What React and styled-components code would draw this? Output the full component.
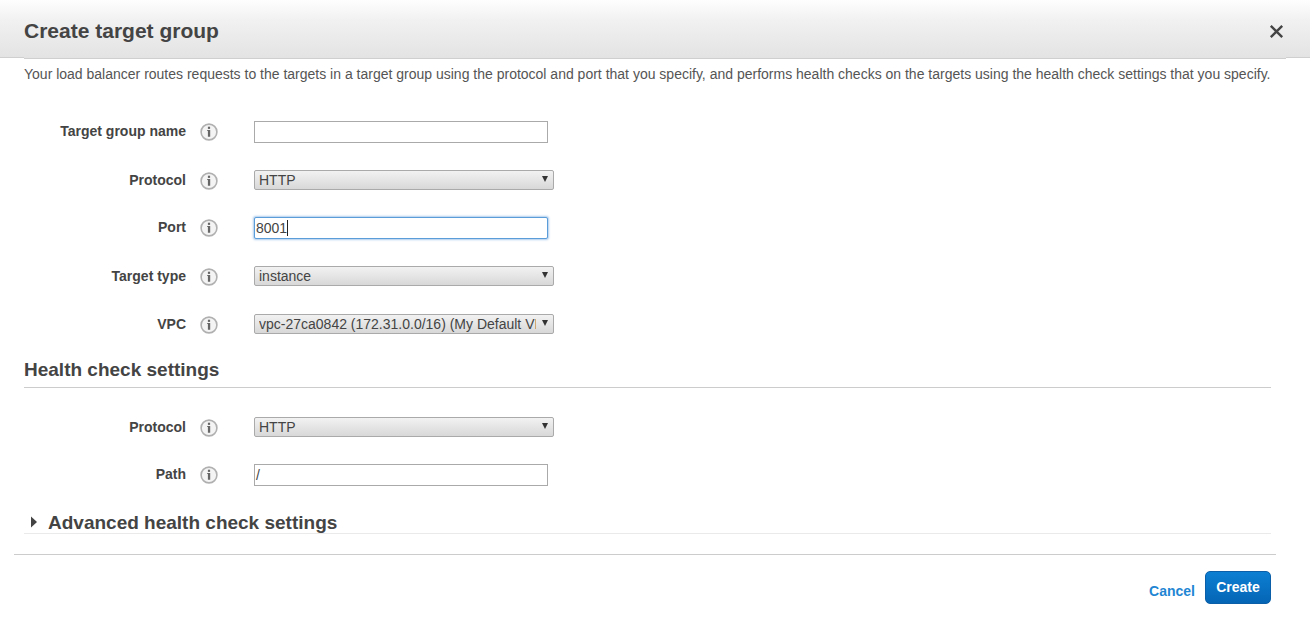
import React from "react";
import styled, { createGlobalStyle } from "styled-components";

const Global = createGlobalStyle`
  html, body { margin: 0; padding: 0; background: #fff; }
  body { font-family: "Liberation Sans", Arial, sans-serif; color: #444; }
  * { box-sizing: border-box; }
`;
const Page = styled.div`
  width: 1310px; height: 624px; overflow: hidden; display: flex; flex-direction: column;
`;
const Header = styled.header`
  position: relative;
  height: 59px; flex: none; display: flex; align-items: center; justify-content: space-between;
  padding: 3px 24px 0 24px;
  background: linear-gradient(to bottom, #fefefe 0%, #f1f1f1 35%, #e3e3e3 100%) no-repeat;
  background-size: 100% 58px;
  &::before {
    content: ""; position: absolute; left: 0; right: 0; top: 57px; height: 1px;
    background: linear-gradient(to right, #cfcfcf 24px, transparent 24px, transparent 1286px, #cfcfcf 1286px);
  }
  &::after {
    content: ""; position: absolute; left: 24px; right: 24px; top: 58px; height: 1px; background: #cfcfcf;
  }
`;
const Title = styled.h1`
  margin: 0; font-size: 21px; font-weight: 700; color: #444; line-height: 24px;
`;
const CloseIcon = styled.svg`
  width: 15px; height: 15px; margin-right: 2px; margin-top: 1px; display: block;
`;
const Body = styled.main`
  padding: 0 39px 0 24px; flex: none;
`;
const Intro = styled.p`
  margin: 0; padding-top: 6px; height: 49px; font-size: 14px; line-height: 18px; color: #555; white-space: nowrap;
`;
const Row = styled.div`
  height: 48px; display: grid; grid-template-columns: 162px 14px 18px 36px auto; align-items: center; justify-content: start;
`;
const Label = styled.label`
  grid-column: 1; text-align: right; font-size: 14px; font-weight: 700; color: #444; line-height: 16px;
  position: relative; top: ${p => (p.$select ? "0" : "-1px")};
`;
const Info = styled.svg`
  grid-column: 3; width: 18px; height: 18px; display: block;
  position: relative; top: ${p => (p.$select ? "1px" : "0")};
`;
const TextBox = styled.div`
  grid-column: 5; width: 294px; height: 22px; background: #fff;
  border: 1px solid ${p => (p.$focus ? "#5b9dd9" : "#aaa")};
  box-shadow: ${p => (p.$focus ? "0 0 2px 1px rgba(70,140,210,.45)" : "none")};
  border-radius: ${p => (p.$focus ? "2px" : "0")};
  padding: 0 1px; font-size: 14px; line-height: 20px; color: #444; display: flex; align-items: center;
`;
const Caret = styled.span`
  display: inline-block; width: 1px; height: 16px; background: #222;
`;
const Select = styled.div`
  grid-column: 5; width: 300px; height: 20px; display: flex; align-items: center; justify-content: space-between;
  padding: 0 5px 0 4px; border: 1px solid #aaa; border-radius: 2px;
  background: linear-gradient(to bottom, #f2f2f2, #d8d8d8);
  font-size: 14px; color: #444; line-height: 18px;
`;
const SelectText = styled.span`
  overflow: hidden; white-space: nowrap; width: 277px;
`;
const Arrow = styled.svg`
  width: 6px; height: 6px; flex: none; display: block; margin-top: -2px;
`;
const SectionHead = styled.h2`
  margin: 0; padding-top: 10px; height: 40px; font-size: 19px; line-height: 24px; font-weight: 700; color: #444;
  border-bottom: 1px solid #ccc;
`;
const Spacer = styled.div`
  height: 15px;
`;
const Advanced = styled.div`
  height: 35px; padding: 13px 0 0 6px; display: flex; align-items: center; gap: 10px;
  border-bottom: 1px solid #eaeaea; font-size: 19px; font-weight: 700; color: #444; line-height: 22px;
`;
const Tri = styled.svg`
  width: 8px; height: 12px; flex: none; display: block; margin-top: -2px;
`;
const Footer = styled.footer`
  margin: 20px 34px 0 14px; border-top: 1px solid #ccc; display: flex; justify-content: flex-end; align-items: flex-start;
  padding: 16px 5px 0 0; gap: 10px;
`;
const Cancel = styled.a`
  font-size: 14px; font-weight: 700; color: #1f86d3; line-height: 16px; margin-top: 12px;
`;
const Primary = styled.button`
  width: 66px; height: 33px; padding: 0 0 1px; border: 1px solid #0a5fa8; border-radius: 5px;
  background: linear-gradient(to bottom, #0c7fd2, #0565b5);
  color: #fff; font: 700 14px "Liberation Sans", Arial, sans-serif;
`;

const InfoIcon = ({ select }) => (
  <Info viewBox="0 0 18 18" $select={select}>
    <circle cx="9" cy="9" r="7.9" fill="#f4f4f4" stroke="#b0b0b0" strokeWidth="1.6" />
    <rect x="7.9" y="3.7" width="2.2" height="2.2" fill="#666" />
    <path d="M7.2 7h3v6.8H7.9v-5.7H7.2z" fill="#666" />
  </Info>
);
const SelectArrow = () => (
  <Arrow viewBox="0 0 6 6"><path d="M0 0h6L3 6z" fill="#333" /></Arrow>
);
const Field = ({ label, select, children }) => (
  <Row>
    <Label $select={select}>{label}</Label>
    <InfoIcon select={select} />
    {children}
  </Row>
);
const Dropdown = ({ value }) => (
  <Select>
    <SelectText>{value}</SelectText>
    <SelectArrow />
  </Select>
);

export default function App() {
  return (
    <Page>
      <Global />
      <Header>
        <Title>Create target group</Title>
        <CloseIcon viewBox="0 0 15 15">
          <path d="M1.8 1.8l11.4 11.4M13.2 1.8L1.8 13.2" stroke="#444" strokeWidth="2.4" fill="none" />
        </CloseIcon>
      </Header>
      <Body>
        <Intro>
          Your load balancer routes requests to the targets in a target group using the protocol and port that you specify, and performs health checks on the targets using the health check settings that you specify.
        </Intro>
        <Field label="Target group name"><TextBox /></Field>
        <Field label="Protocol" select><Dropdown value="HTTP" /></Field>
        <Field label="Port"><TextBox $focus>8001<Caret /></TextBox></Field>
        <Field label="Target type" select><Dropdown value="instance" /></Field>
        <Field label="VPC" select><Dropdown value="vpc-27ca0842 (172.31.0.0/16) (My Default VPC)" /></Field>
        <SectionHead>Health check settings</SectionHead>
        <Spacer />
        <Field label="Protocol" select><Dropdown value="HTTP" /></Field>
        <Field label="Path"><TextBox>/</TextBox></Field>
        <Advanced>
          <Tri viewBox="0 0 8 12"><path d="M1 0.5l6 5.5-6 5.5z" fill="#444" /></Tri>
          Advanced health check settings
        </Advanced>
      </Body>
      <Footer>
        <Cancel>Cancel</Cancel>
        <Primary>Create</Primary>
      </Footer>
    </Page>
  );
}
